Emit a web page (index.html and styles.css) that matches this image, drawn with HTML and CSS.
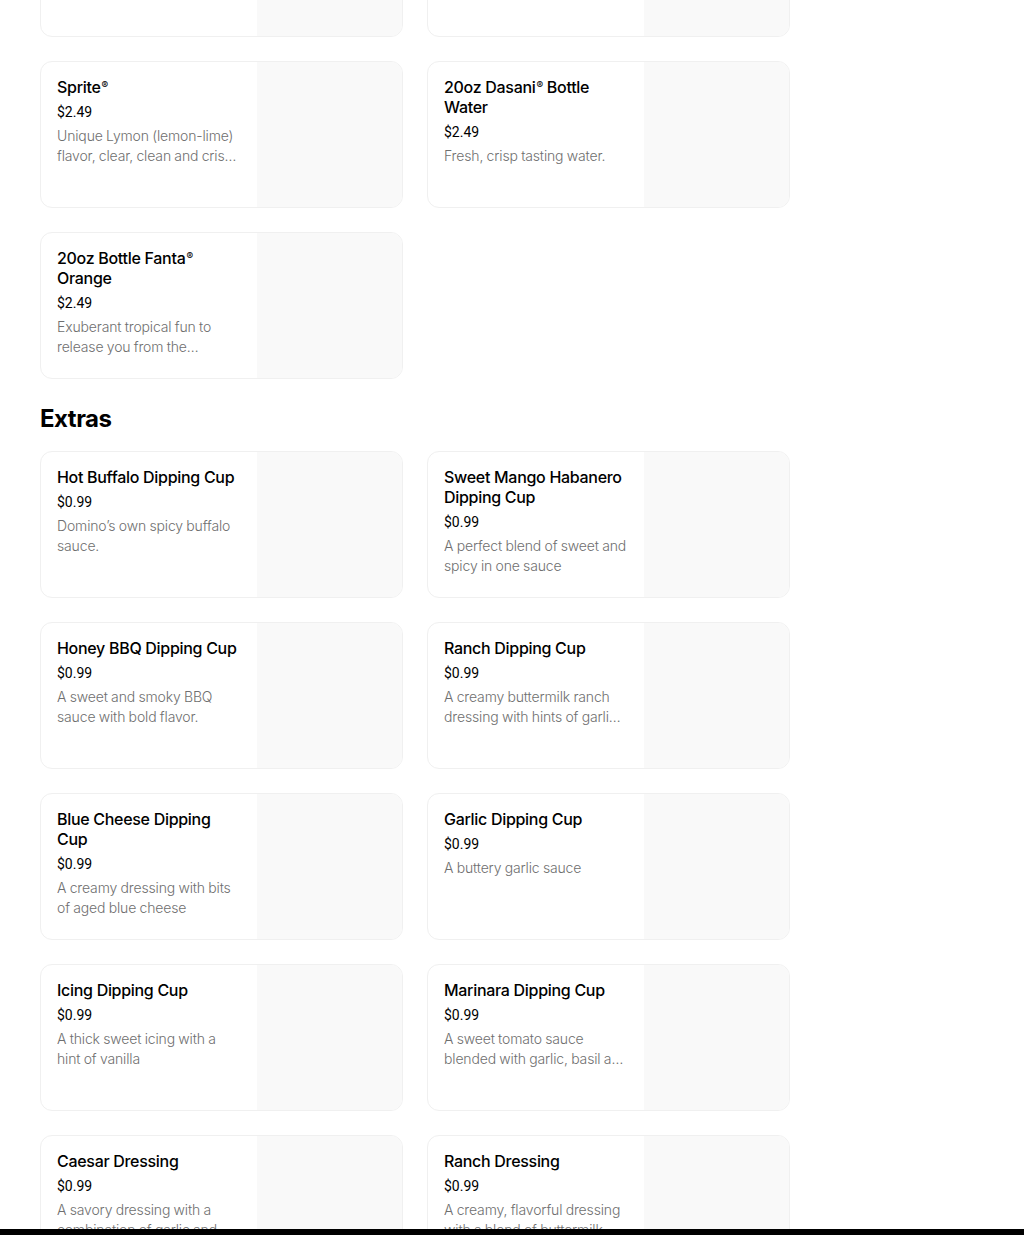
FILE: index.html
```html
<!DOCTYPE html>
<html lang="en">
<head>
<meta charset="utf-8">
<title>Menu</title>
<link rel="stylesheet" href="styles.css">
</head>
<body>
<main class="menu">
  <section class="grid scrolled">
    <div class="card">
      <div class="info">
        <h3 class="title">20oz Bottle Coke<span class="reg">®</span></h3>
        <div class="price">$2.49</div>
        <p class="desc">The cola with the refreshing taste you know and love.</p>
      </div>
      <div class="thumb"></div>
    </div>
    <div class="card">
      <div class="info">
        <h3 class="title">20oz Bottle Diet Coke<span class="reg">®</span></h3>
        <div class="price">$2.49</div>
        <p class="desc">Crisp, refreshing taste with zero calories.</p>
      </div>
      <div class="thumb"></div>
    </div>
    <div class="card">
      <div class="info">
        <h3 class="title">Sprite<span class="reg">®</span></h3>
        <div class="price">$2.49</div>
        <p class="desc">Unique Lymon (lemon-lime) flavor, clear, clean and crisp with no caffeine.</p>
      </div>
      <div class="thumb"></div>
    </div>
    <div class="card">
      <div class="info">
        <h3 class="title">20oz Dasani<span class="reg">®</span> Bottle Water</h3>
        <div class="price">$2.49</div>
        <p class="desc">Fresh, crisp tasting water.</p>
      </div>
      <div class="thumb"></div>
    </div>
    <div class="card">
      <div class="info">
        <h3 class="title">20oz Bottle Fanta<span class="reg">®</span> Orange</h3>
        <div class="price">$2.49</div>
        <p class="desc">Exuberant tropical fun to release you from the ordinary.</p>
      </div>
      <div class="thumb"></div>
    </div>
  </section>

  <h2 class="section-title">Extras</h2>

  <section class="grid">
    <div class="card">
      <div class="info">
        <h3 class="title">Hot Buffalo Dipping Cup</h3>
        <div class="price">$0.99</div>
        <p class="desc">Domino’s own spicy buffalo sauce.</p>
      </div>
      <div class="thumb"></div>
    </div>
    <div class="card">
      <div class="info">
        <h3 class="title">Sweet Mango Habanero Dipping Cup</h3>
        <div class="price">$0.99</div>
        <p class="desc">A perfect blend of sweet and spicy in one sauce</p>
      </div>
      <div class="thumb"></div>
    </div>
    <div class="card">
      <div class="info">
        <h3 class="title">Honey BBQ Dipping Cup</h3>
        <div class="price">$0.99</div>
        <p class="desc">A sweet and smoky BBQ sauce with bold flavor.</p>
      </div>
      <div class="thumb"></div>
    </div>
    <div class="card">
      <div class="info">
        <h3 class="title">Ranch Dipping Cup</h3>
        <div class="price">$0.99</div>
        <p class="desc">A creamy buttermilk ranch dressing with hints of garlic and onion</p>
      </div>
      <div class="thumb"></div>
    </div>
    <div class="card">
      <div class="info">
        <h3 class="title">Blue Cheese Dipping Cup</h3>
        <div class="price">$0.99</div>
        <p class="desc">A creamy dressing with bits of aged blue cheese</p>
      </div>
      <div class="thumb"></div>
    </div>
    <div class="card">
      <div class="info">
        <h3 class="title">Garlic Dipping Cup</h3>
        <div class="price">$0.99</div>
        <p class="desc">A buttery garlic sauce</p>
      </div>
      <div class="thumb"></div>
    </div>
    <div class="card">
      <div class="info">
        <h3 class="title">Icing Dipping Cup</h3>
        <div class="price">$0.99</div>
        <p class="desc">A thick sweet icing with a hint of vanilla</p>
      </div>
      <div class="thumb"></div>
    </div>
    <div class="card">
      <div class="info">
        <h3 class="title">Marinara Dipping Cup</h3>
        <div class="price">$0.99</div>
        <p class="desc">A sweet tomato sauce blended with garlic, basil and oregano</p>
      </div>
      <div class="thumb"></div>
    </div>
    <div class="card">
      <div class="info">
        <h3 class="title">Caesar Dressing</h3>
        <div class="price">$0.99</div>
        <p class="desc">A savory dressing with a combination of garlic and parmesan</p>
      </div>
      <div class="thumb"></div>
    </div>
    <div class="card">
      <div class="info">
        <h3 class="title">Ranch Dressing</h3>
        <div class="price">$0.99</div>
        <p class="desc">A creamy, flavorful dressing with a blend of buttermilk and herbs</p>
      </div>
      <div class="thumb"></div>
    </div>
  </section>
</main>
<div class="bottom-bar"></div>
</body>
</html>
```

FILE: styles.css
```css
html, body {
  margin: 0;
  padding: 0;
  background: #ffffff;
}

body {
  font-family: Inter, "Liberation Sans", Arial, sans-serif;
  color: #000000;
  overflow: hidden;
  height: 1235px;
}

.menu {
  width: 750px;
  padding-left: 40px;
}

.grid {
  display: grid;
  grid-template-columns: 363px 363px;
  column-gap: 24px;
  row-gap: 24px;
}

.scrolled {
  margin-top: -110px;
}

.card {
  box-sizing: border-box;
  height: 147px;
  border: 1px solid #f0f0f0;
  border-radius: 12px;
  overflow: hidden;
  display: grid;
  grid-template-columns: 216px 145px;
  background: #ffffff;
}

.info {
  padding: 16px;
  min-width: 0;
}

.title {
  margin: -1px 0 0;
  font-size: 16px;
  line-height: 20px;
  font-weight: 500;
  letter-spacing: -0.3px;
  color: #000000;
}

.reg {
  font-size: 10px;
  vertical-align: 4px;
  line-height: 0;
  margin-left: 1px;
}

.price {
  margin-top: 5px;
  font-family: Roboto, "Liberation Sans", Arial, sans-serif;
  font-size: 14px;
  line-height: 20px;
  color: #000000;
}

.desc {
  margin: 4px 0 0;
  font-size: 14px;
  line-height: 20px;
  font-weight: 300;
  letter-spacing: -0.15px;
  word-spacing: -0.4px;
  color: #6f6f6f;
  display: -webkit-box;
  -webkit-line-clamp: 2;
  -webkit-box-orient: vertical;
  overflow: hidden;
}

.thumb {
  background: #f9f9f9;
}

.section-title {
  margin: 24px 0 16px;
  font-size: 24px;
  line-height: 32px;
  font-weight: 700;
  letter-spacing: -0.5px;
}

.bottom-bar {
  position: fixed;
  left: 0;
  right: 0;
  bottom: 0;
  height: 6px;
  background: #000000;
}
```
